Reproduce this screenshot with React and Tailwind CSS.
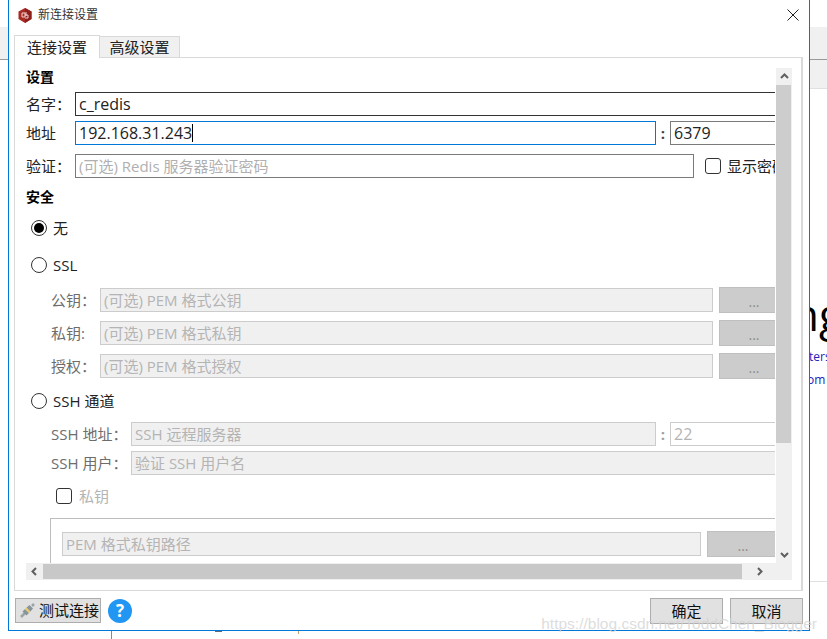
const font = { fontFamily: '"Open Sans","Noto Sans CJK SC",sans-serif' };

function Chevron({ dir }) {
  const d = {
    up: "M1 6 L4.5 2.5 L8 6",
    down: "M1 3 L4.5 6.5 L8 3",
    left: "M6 1 L2.5 4.5 L6 8",
    right: "M3 1 L6.5 4.5 L3 8",
  }[dir];
  return (
    <svg width="9" height="9" viewBox="0 0 9 9" fill="none" stroke="#5f5f5f" strokeWidth="2">
      <path d={d} />
    </svg>
  );
}

function Radio({ checked }) {
  return (
    <span className="w-4 h-4 shrink-0 rounded-full border-[1.5px] border-[#333] flex items-center justify-center bg-white">
      {checked && <span className="w-2.5 h-2.5 rounded-full bg-black"></span>}
    </span>
  );
}

function Check() {
  return <span className="block w-4 h-4 shrink-0 rounded-[3px] border border-[#333] bg-white"></span>;
}

function Input({ value, placeholder, className = "" }) {
  return (
    <div className={`h-6 border flex items-center pl-[3px] whitespace-nowrap overflow-hidden ${className}`}>
      {value || placeholder}
    </div>
  );
}

const off = "border-[#cccccc] bg-[#f0f0f0] text-[#b4b4b4]";

function Dots({ className = "" }) {
  return (
    <div className={`h-[26px] bg-[#cccccc] border border-[#bfbfbf] text-[#8c8c8c] text-sm flex items-center justify-center pt-1 ${className}`}>
      ...
    </div>
  );
}

function KeyRow({ label, placeholder, className = "" }) {
  return (
    <div className={`flex items-center pl-[25px] ${className}`}>
      <span className="w-[49px] text-[#6d6d6d]">{label}</span>
      <Input placeholder={placeholder} className={`w-[613px] ${off}`} />
      <Dots className="w-[70px] ml-[6px]" />
    </div>
  );
}

function Form() {
  return (
    <div className="w-[790px] text-[15px] text-[#222]">
      <div className="h-4 flex items-center font-bold text-[14px] text-black">设置</div>

      <div className="flex items-center mt-2">
        <span className="w-[49px]">名字：</span>
        <Input value="c_redis" className="flex-1 border-[#333] text-[16px] text-[#222]" />
      </div>
      <div className="flex items-center mt-[5px]">
        <span className="w-[49px]">地址</span>
        <div className="w-[581px] h-6 border border-[#0078d7] flex items-center pl-[3px] text-[16px]">
          192.168.31.243
          <span className="w-px h-[18px] bg-black"></span>
        </div>
        <span className="w-[14px] text-center font-bold text-[#444]">:</span>
        <Input value="6379" className="flex-1 border-[#7a7a7a] text-[16px]" />
      </div>
      <div className="flex items-center mt-[9px]">
        <span className="w-[49px]">验证：</span>
        <Input placeholder="(可选) Redis 服务器验证密码" className="w-[619px] border-[#7a7a7a] text-[#b0b0b0]" />
        <span className="ml-[11px] w-4 shrink-0"><Check /></span>
        <span className="ml-[6px] whitespace-nowrap">显示密码</span>
      </div>

      <div className="h-[18px] mt-[9px] flex items-center font-bold text-[14px] text-black">安全</div>
      <div className="h-5 mt-[13px] ml-[5px] flex items-center gap-[6px]"><Radio checked />无</div>
      <div className="h-5 mt-[17px] ml-[5px] flex items-center gap-[6px]"><Radio />SSL</div>

      <KeyRow className="mt-3" label="公钥：" placeholder="(可选) PEM 格式公钥" />
      <KeyRow className="mt-[7px]" label="私钥:" placeholder="(可选) PEM 格式私钥" />
      <KeyRow className="mt-[7px]" label="授权：" placeholder="(可选) PEM 格式授权" />

      <div className="h-5 mt-3 ml-[5px] flex items-center gap-[6px]"><Radio />SSH 通道</div>

      <div className="flex items-center pl-[25px] mt-[11px]">
        <span className="w-[80px] text-[#6d6d6d]">SSH 地址：</span>
        <Input placeholder="SSH 远程服务器" className={`w-[525px] ${off}`} />
        <span className="w-[14px] text-center font-bold text-[#a0a0a0]">:</span>
        <Input placeholder="22" className="flex-1 border-[#cccccc] text-[#b4b4b4] text-[16px]" />
      </div>
      <div className="flex items-center pl-[25px] mt-[5px]">
        <span className="w-[80px] text-[#6d6d6d]">SSH 用户：</span>
        <Input placeholder="验证 SSH 用户名" className={`flex-1 ${off}`} />
      </div>

      <div className="h-5 mt-[11px] ml-[30px] flex items-center gap-[7px] text-[#b4b4b4]"><Check />私钥</div>

      <div className="mt-3 ml-6 h-[80px] border border-[#bdbdbd] pl-[11px] pt-[12px] flex items-start">
        <Input placeholder="PEM 格式私钥路径" className={`w-[639px] mt-px ${off}`} />
        <Dots className="w-[72px] ml-[6px]" />
      </div>
    </div>
  );
}

function ScrollArea() {
  return (
    <div className="w-[766px] h-[512px] grid grid-cols-[750px_16px] grid-rows-[495px_17px]">
      <div className="bg-white">
        <div className="w-[749px] h-full overflow-hidden">
          <Form />
        </div>
      </div>
      <div className="bg-[#f0f0f0] flex flex-col">
        <div className="h-[17px] flex items-center justify-center"><Chevron dir="up" /></div>
        <div className="h-[358px] w-[15px] bg-[#cdcdcd]"></div>
        <div className="flex-1 flex items-end justify-center pb-[4px]"><Chevron dir="down" /></div>
      </div>
      <div className="bg-[#f0f0f0] flex items-center">
        <div className="w-[17px] flex items-center justify-center"><Chevron dir="left" /></div>
        <div className="w-[699px] h-[15px] bg-[#c8c8c8]"></div>
        <div className="flex-1 flex items-center justify-center"><Chevron dir="right" /></div>
      </div>
      <div className="bg-[#f0f0f0]"></div>
    </div>
  );
}

function Logo() {
  return (
    <svg width="14" height="15" viewBox="0 0 14 15" className="shrink-0">
      <path d="M7 0 L13.5 3.5 V11 L7 15 L0.5 11 V3.5 Z" fill="#a92b25" />
      <path d="M7 0 L13.5 3.5 V11 L7 15 Z" fill="#8e1f1b" />
      <path d="M4 5 H7 V9 H4 Z M7 7 H10 V10 H7 M8 4 V8" fill="none" stroke="#f3d6d3" strokeWidth="1" />
    </svg>
  );
}

function Plug() {
  return (
    <svg width="15" height="15" viewBox="0 0 15 15" className="shrink-0">
      <path d="M1 14 L5 10" stroke="#9aa5a8" strokeWidth="2.5" />
      <path d="M2.5 8.5 L6.5 12.5 L9 10 L5 6 Z" fill="#87959a" />
      <path d="M5 6 L9 10 L10.5 8.5 L6.5 4.5 Z" fill="#e8c867" />
      <path d="M6.5 4.5 L10.5 8.5 L13 5.5 L9.5 2 Z" fill="#87959a" />
      <path d="M12 3 L14 1" stroke="#9aa5a8" strokeWidth="2.5" />
    </svg>
  );
}

function Dialog() {
  return (
    <div className="absolute left-2 top-0 w-[802px] h-[631px] bg-white border-x border-b border-[#0078d7] flex flex-col">
      <div className="h-[29px] mb-[5px] shrink-0 flex items-center pl-[9px] pr-[8px] pt-px text-[12px] text-[#333]">
        <Logo />
        <span className="ml-[6px]">新连接设置</span>
        <svg width="12" height="12" viewBox="0 0 12 12" className="ml-auto mr-[2px]" fill="none" stroke="#222" strokeWidth="1">
          <path d="M0.5 0.5 L11.5 11.5 M11.5 0.5 L0.5 11.5" />
        </svg>
      </div>
      <div className="h-[23px] shrink-0 ml-[5px] flex items-end text-[15px] text-[#222]">
        <div className="w-[86px] h-[23px] bg-white border border-b-0 border-[#d9d9d9] flex items-center justify-center relative z-10 -mb-px">连接设置</div>
        <div className="w-[80px] h-[21px] bg-[#f0f0f0] border border-l-0 border-b-0 border-[#d9d9d9] flex items-center justify-center">高级设置</div>
      </div>
      <div className="ml-[5px] w-[789px] h-[534px] shrink-0 border border-[#d9d9d9] border-r-[2px] pl-[11px] pt-[10px]">
        <ScrollArea />
      </div>
      <div className="flex-1 flex items-start pt-[7px] pl-[6px] text-[15px] text-[#111]">
        <div className="w-[86px] h-[25px] bg-[#e1e1e1] border border-[#adadad] flex items-center pl-[4px] gap-[4px]">
          <Plug />
          <span className="whitespace-nowrap">测试连接</span>
        </div>
        <div className="ml-[7px] mt-px w-6 h-6 rounded-full bg-[#2196f3] text-white font-bold text-[17px] flex items-center justify-center">?</div>
        <div className="ml-auto w-[73px] h-[26px] bg-[#e1e1e1] border border-[#adadad] flex items-center justify-center">确定</div>
        <div className="ml-[7px] mr-[6px] w-[73px] h-[26px] bg-[#e1e1e1] border border-[#adadad] flex items-center justify-center">取消</div>
      </div>
    </div>
  );
}

function Backdrop() {
  return (
    <>
      <div className="absolute left-0 top-[27px] w-2 h-[33px] bg-[#f0f0f0] border-b border-[#999]"></div>
      <div className="absolute left-[810px] right-0 top-[27px] h-[62px] bg-[#f0f0f0] border-b border-[#e0e0e0]">
        <div className="mt-[32px] h-px bg-[#999]"></div>
      </div>
      <div className="absolute left-[792px] top-[292px] text-[44px] leading-none text-black" style={{ fontFamily: '"Open Sans",sans-serif' }}>ng</div>
      <div className="absolute left-[809px] top-[348px] text-[12px] text-[#2222bb] whitespace-nowrap">ters</div>
      <div className="absolute left-[807px] top-[371px] text-[12px] text-[#2222bb] whitespace-nowrap">om i</div>
      <div className="absolute left-[810px] right-0 top-[581px] h-px bg-[#e0e0e0]"></div>
      <div className="absolute left-[111px] top-[631px] w-px h-2 bg-[#888]"></div>
      <div className="absolute left-[215px] top-[631px] w-[7px] h-px bg-[#5a6a80]"></div>
      <div className="absolute left-[298px] top-[631px] w-px h-[3px] bg-[#c8a070]"></div>
    </>
  );
}

export default function App() {
  return (
    <div className="relative w-[827px] h-[639px] overflow-hidden bg-white" style={font}>
      <Backdrop />
      <Dialog />
      <div className="absolute right-[10px] top-[612px] text-[15.5px] text-[#d4d4d4]/80 whitespace-nowrap pointer-events-none" style={{ fontFamily: '"Liberation Sans",sans-serif' }}>
        https://blog.csdn.net/ToddChen_Blogger
      </div>
    </div>
  );
}
